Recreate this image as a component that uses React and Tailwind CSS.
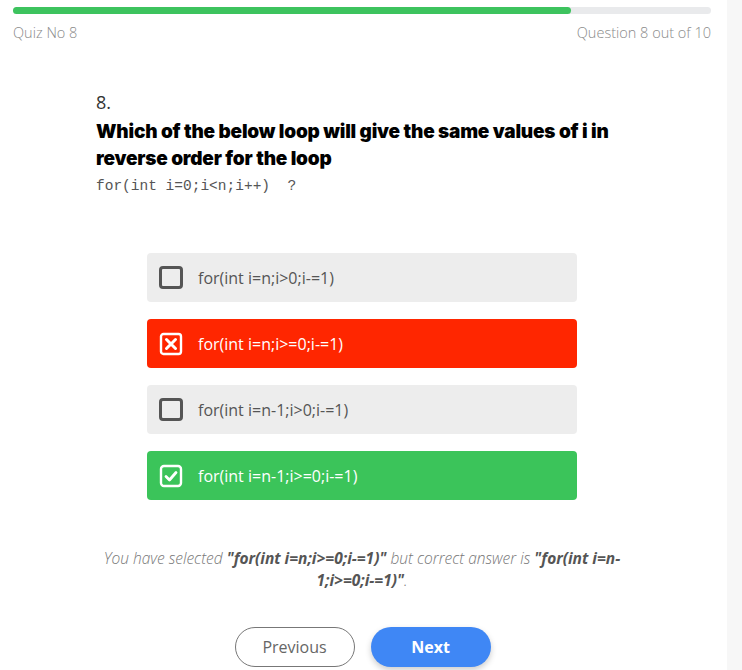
import React from "react";

const options = [
  { text: "for(int i=n;i>0;i-=1)", state: "none" },
  { text: "for(int i=n;i>=0;i-=1)", state: "wrong" },
  { text: "for(int i=n-1;i>0;i-=1)", state: "none" },
  { text: "for(int i=n-1;i>=0;i-=1)", state: "right" },
];

function Box({ state }) {
  if (state === "wrong") {
    return (
      <svg width="24" height="24" viewBox="0 0 24 24" className="shrink-0">
        <rect x="2" y="2" width="20" height="20" rx="2.5" fill="none" stroke="white" strokeWidth="2.4" />
        <path d="M7.5 7.5 L16.5 16.5 M16.5 7.5 L7.5 16.5" stroke="white" strokeWidth="3" strokeLinecap="round" />
      </svg>
    );
  }
  if (state === "right") {
    return (
      <svg width="24" height="24" viewBox="0 0 24 24" className="shrink-0">
        <rect x="2" y="2" width="20" height="20" rx="3" fill="none" stroke="white" strokeWidth="2.4" />
        <path d="M7 12.5 L10.5 16 L17 8.5" fill="none" stroke="white" strokeWidth="2.8" strokeLinecap="round" strokeLinejoin="round" />
      </svg>
    );
  }
  return <div className="w-[24px] h-[23px] shrink-0 border-[3px] border-[#555555] rounded-[4px]" />;
}

export default function App() {
  const sans = { fontFamily: "'Open Sans', 'Noto Sans', sans-serif" };
  return (
    <div className="flex w-[742px] h-[670px] bg-white overflow-hidden" style={sans}>
      <div className="w-[724px] shrink-0 flex flex-col">
        <div className="px-[13px] pt-[7px]">
          <div className="h-[7px] w-full rounded-full bg-[#e9eaec]">
            <div className="h-[7px] w-[558px] rounded-full bg-[#3dc35e]" />
          </div>
          <div className="flex justify-between mt-[9px] text-[14.5px] text-[#8a8a8a] font-light leading-[20px]">
            <span>Quiz No 8</span>
            <span>Question 8 out of 10</span>
          </div>
        </div>

        <div className="w-[532px] mx-auto mt-[47px]">
          <div className="text-[18px] text-[#333] leading-[24px] font-medium">8.</div>
          <div
            className="text-[19px] font-black text-black leading-[27px] mt-[4px] tracking-[-0.2px]"
            style={{ fontFamily: "Inter, 'Noto Sans', sans-serif" }}
          >
            Which of the below loop will give the same values of i in reverse order for the loop
          </div>
          <div
            className="text-[14.5px] text-[#555] leading-[20px] mt-[4px] whitespace-pre"
            style={{ fontFamily: "'Liberation Mono', monospace" }}
          >
            {"for(int i=0;i<n;i++)  ?"}
          </div>
        </div>

        <div className="w-[430px] mx-auto mt-[57px] flex flex-col gap-[17px]">
          {options.map((o, i) => {
            const bg =
              o.state === "wrong" ? "bg-[#ff2600] text-white" : o.state === "right" ? "bg-[#3bc45a] text-white" : "bg-[#ededed] text-[#555]";
            return (
              <div key={i} className={`h-[49px] rounded-[4px] flex items-center pl-[12px] gap-[15px] text-[16px] ${bg}`}>
                <Box state={o.state} />
                <span className="leading-[20px]">{o.text}</span>
              </div>
            );
          })}
        </div>

        <div className="mt-[47px] text-center italic text-[15.5px] leading-[22px] text-[#777] font-light">
          You have selected <b className="font-bold text-[#555]">"for(int i=n;i&gt;=0;i-=1)"</b> but correct answer is{" "}
          <b className="font-bold text-[#555]">"for(int i=n-</b>
          <br />
          <b className="font-bold text-[#555]">1;i&gt;=0;i-=1)"</b>.
        </div>

        <div className="flex justify-center gap-[16px] mt-[36px] pl-[1px]">
          <button className="w-[120px] h-[40px] rounded-full border border-[#777] text-[#666] text-[16px] font-medium bg-white">
            Previous
          </button>
          <button className="w-[120px] h-[40px] rounded-full bg-[#3f87f5] text-white text-[16px] font-bold shadow-[0_3px_6px_rgba(0,0,0,0.2)]">
            Next
          </button>
        </div>
      </div>
      <div className="w-[3px] shrink-0 bg-white" />
      <div className="flex-1 bg-[#f7f7f7]" />
    </div>
  );
}
